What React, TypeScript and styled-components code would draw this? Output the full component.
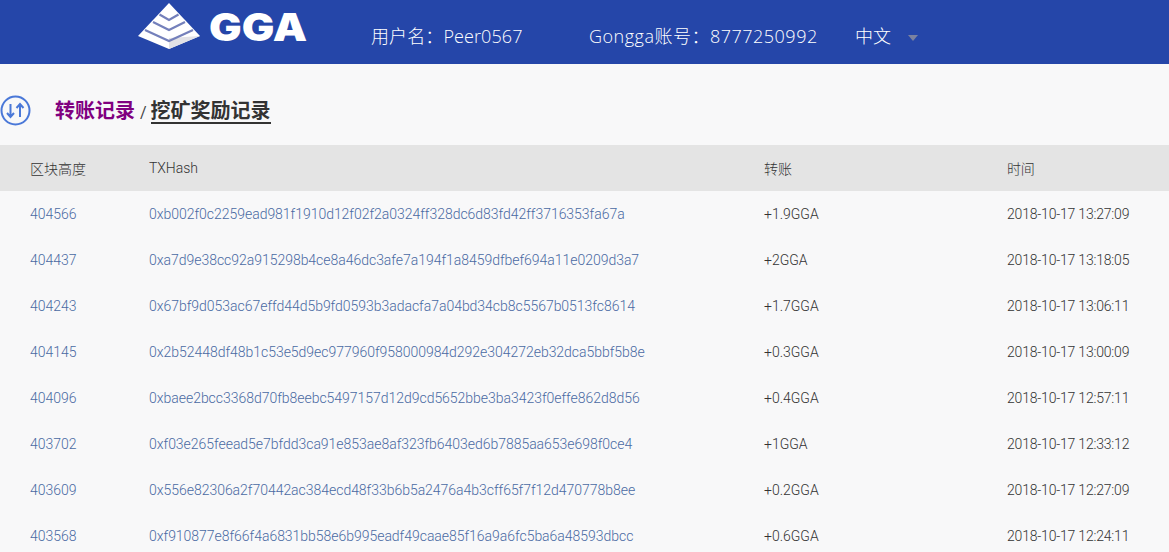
import React from "react";
import styled, { createGlobalStyle } from "styled-components";

interface Transfer {
  height: string;
  hash: string;
  amount: string;
  time: string;
}

const transfers: Transfer[] = [
  { height: "404566", hash: "0xb002f0c2259ead981f1910d12f02f2a0324ff328dc6d83fd42ff3716353fa67a", amount: "+1.9GGA", time: "2018-10-17 13:27:09" },
  { height: "404437", hash: "0xa7d9e38cc92a915298b4ce8a46dc3afe7a194f1a8459dfbef694a11e0209d3a7", amount: "+2GGA", time: "2018-10-17 13:18:05" },
  { height: "404243", hash: "0x67bf9d053ac67effd44d5b9fd0593b3adacfa7a04bd34cb8c5567b0513fc8614", amount: "+1.7GGA", time: "2018-10-17 13:06:11" },
  { height: "404145", hash: "0x2b52448df48b1c53e5d9ec977960f958000984d292e304272eb32dca5bbf5b8e", amount: "+0.3GGA", time: "2018-10-17 13:00:09" },
  { height: "404096", hash: "0xbaee2bcc3368d70fb8eebc5497157d12d9cd5652bbe3ba3423f0effe862d8d56", amount: "+0.4GGA", time: "2018-10-17 12:57:11" },
  { height: "403702", hash: "0xf03e265feead5e7bfdd3ca91e853ae8af323fb6403ed6b7885aa653e698f0ce4", amount: "+1GGA", time: "2018-10-17 12:33:12" },
  { height: "403609", hash: "0x556e82306a2f70442ac384ecd48f33b6b5a2476a4b3cff65f7f12d470778b8ee", amount: "+0.2GGA", time: "2018-10-17 12:27:09" },
  { height: "403568", hash: "0xf910877e8f66f4a6831bb58e6b995eadf49caae85f16a9a6fc5ba6a48593dbcc", amount: "+0.6GGA", time: "2018-10-17 12:24:11" },
];

const App: React.FC = () => {
  return (
    <Page>
      <GlobalStyle />
      <Header>
        <Logo>
          <svg width="62" height="50" viewBox="0 0 62 50">
            <polygon points="31,2 62,35 31,48 0,35" fill="#fff" />
            <polygon points="31,48 62,35 31,37" fill="#e2e2e6" />
            <path d="M21.5 13.5 L31 19 L40.5 13.5 M15 21 L31 29 L47 21 M7 29 L31 40 L55 29" fill="none" stroke="#7480bb" strokeWidth="2.2" />
          </svg>
          <LogoText>GGA</LogoText>
        </Logo>
        <UserName>用户名：Peer0567</UserName>
        <Account>Gongga账号：8777250992</Account>
        <Language>中文</Language>
        <Caret />
      </Header>
      <TitleRow>
        <TitleIcon width="31" height="31" viewBox="0 0 31 31" fill="none" stroke="#4a78d8" strokeWidth="2">
          <circle cx="15.5" cy="15.5" r="14" />
          <path d="M10.5 9 V22 M7 18 L10.5 22 L14 18 M20 22 V9 M16.5 13 L20 9 L23.5 13" />
        </TitleIcon>
        <Titles>
          <ActiveTitle>转账记录</ActiveTitle>
          <Slash>/</Slash>
          <OtherTitle>挖矿奖励记录</OtherTitle>
        </Titles>
      </TitleRow>
      <TableHead>
        <HeightCell>区块高度</HeightCell>
        <HashCell>TXHash</HashCell>
        <AmountCell>转账</AmountCell>
        <TimeCell>时间</TimeCell>
      </TableHead>
      {transfers.map((t) => (
        <Row key={t.hash}>
          <HeightCell $link>{t.height}</HeightCell>
          <HashCell $link>{t.hash}</HashCell>
          <AmountCell>{t.amount}</AmountCell>
          <TimeCell>{t.time}</TimeCell>
        </Row>
      ))}
    </Page>
  );
};

export default App;

// Styled Components

const GlobalStyle = createGlobalStyle`
  html, body {
    margin: 0;
    height: 100%;
    overflow: hidden;
    background: #f8f8f9;
  }
`;

const Page = styled.div`
  font-family: Roboto, "Noto Sans CJK SC", sans-serif;
  font-weight: 300;
  color: #333;
  height: 552px;
  overflow: hidden;
`;

const Header = styled.header`
  height: 64px;
  background: #2546a9;
  color: #fff;
  display: flex;
  align-items: center;
  padding-left: 138px;
  font-family: "Open Sans", "Noto Sans CJK SC", sans-serif;
  font-size: 18px;
`;

const Logo = styled.div`
  width: 233px;
  height: 50px;
  margin-top: -12px;
  display: flex;
  align-items: center;
  gap: 9px;
`;

const LogoText = styled.span`
  font-family: Inter, sans-serif;
  font-weight: 900;
  font-size: 38px;
  margin-top: 1px;
  transform: scaleX(1.14);
  transform-origin: left center;
`;

const UserName = styled.span`
  width: 218px;
  margin-top: 6px;
  letter-spacing: 0.1px;
`;

const Account = styled.span`
  width: 266px;
  margin-top: 6px;
  letter-spacing: 0.5px;
`;

const Language = styled.span`
  margin-top: 5px;
`;

const Caret = styled.span`
  margin: 12px 0 0 17px;
  border-left: 5px solid transparent;
  border-right: 5px solid transparent;
  border-top: 6px solid #7b82a0;
`;

const TitleRow = styled.div`
  height: 81px;
  display: flex;
  align-items: center;
  gap: 24px;
`;

const TitleIcon = styled.svg`
  margin-top: 11px;
`;

const Titles = styled.div`
  display: flex;
  align-items: baseline;
  gap: 4px;
  font-size: 20px;
  font-weight: 700;
  margin-top: 9px;
`;

const ActiveTitle = styled.span`
  color: #800080;
`;

const Slash = styled.span`
  font-size: 16px;
  font-weight: 400;
  color: #444;
  margin-left: 1px;
`;

const OtherTitle = styled.span`
  color: #333;
  border-bottom: 2px solid #333;
  line-height: 21px;
`;

const TableHead = styled.div`
  height: 46px;
  background: #e4e4e4;
  display: flex;
  align-items: center;
  font-size: 14px;
`;

const Row = styled.div`
  height: 46px;
  display: flex;
  align-items: center;
  font-size: 14px;
`;

const HeightCell = styled.div<{ $link?: boolean }>`
  width: 119px;
  padding-left: 30px;
  color: ${(p) => (p.$link ? "#4a6aa3" : "#333")};
`;

const HashCell = styled.div<{ $link?: boolean }>`
  width: 615px;
  white-space: nowrap;
  letter-spacing: -0.03px;
  color: ${(p) => (p.$link ? "#4a6aa3" : "#333")};
`;

const AmountCell = styled.div`
  width: 243px;
`;

const TimeCell = styled.div`
  white-space: nowrap;
  letter-spacing: -0.2px;
`;
